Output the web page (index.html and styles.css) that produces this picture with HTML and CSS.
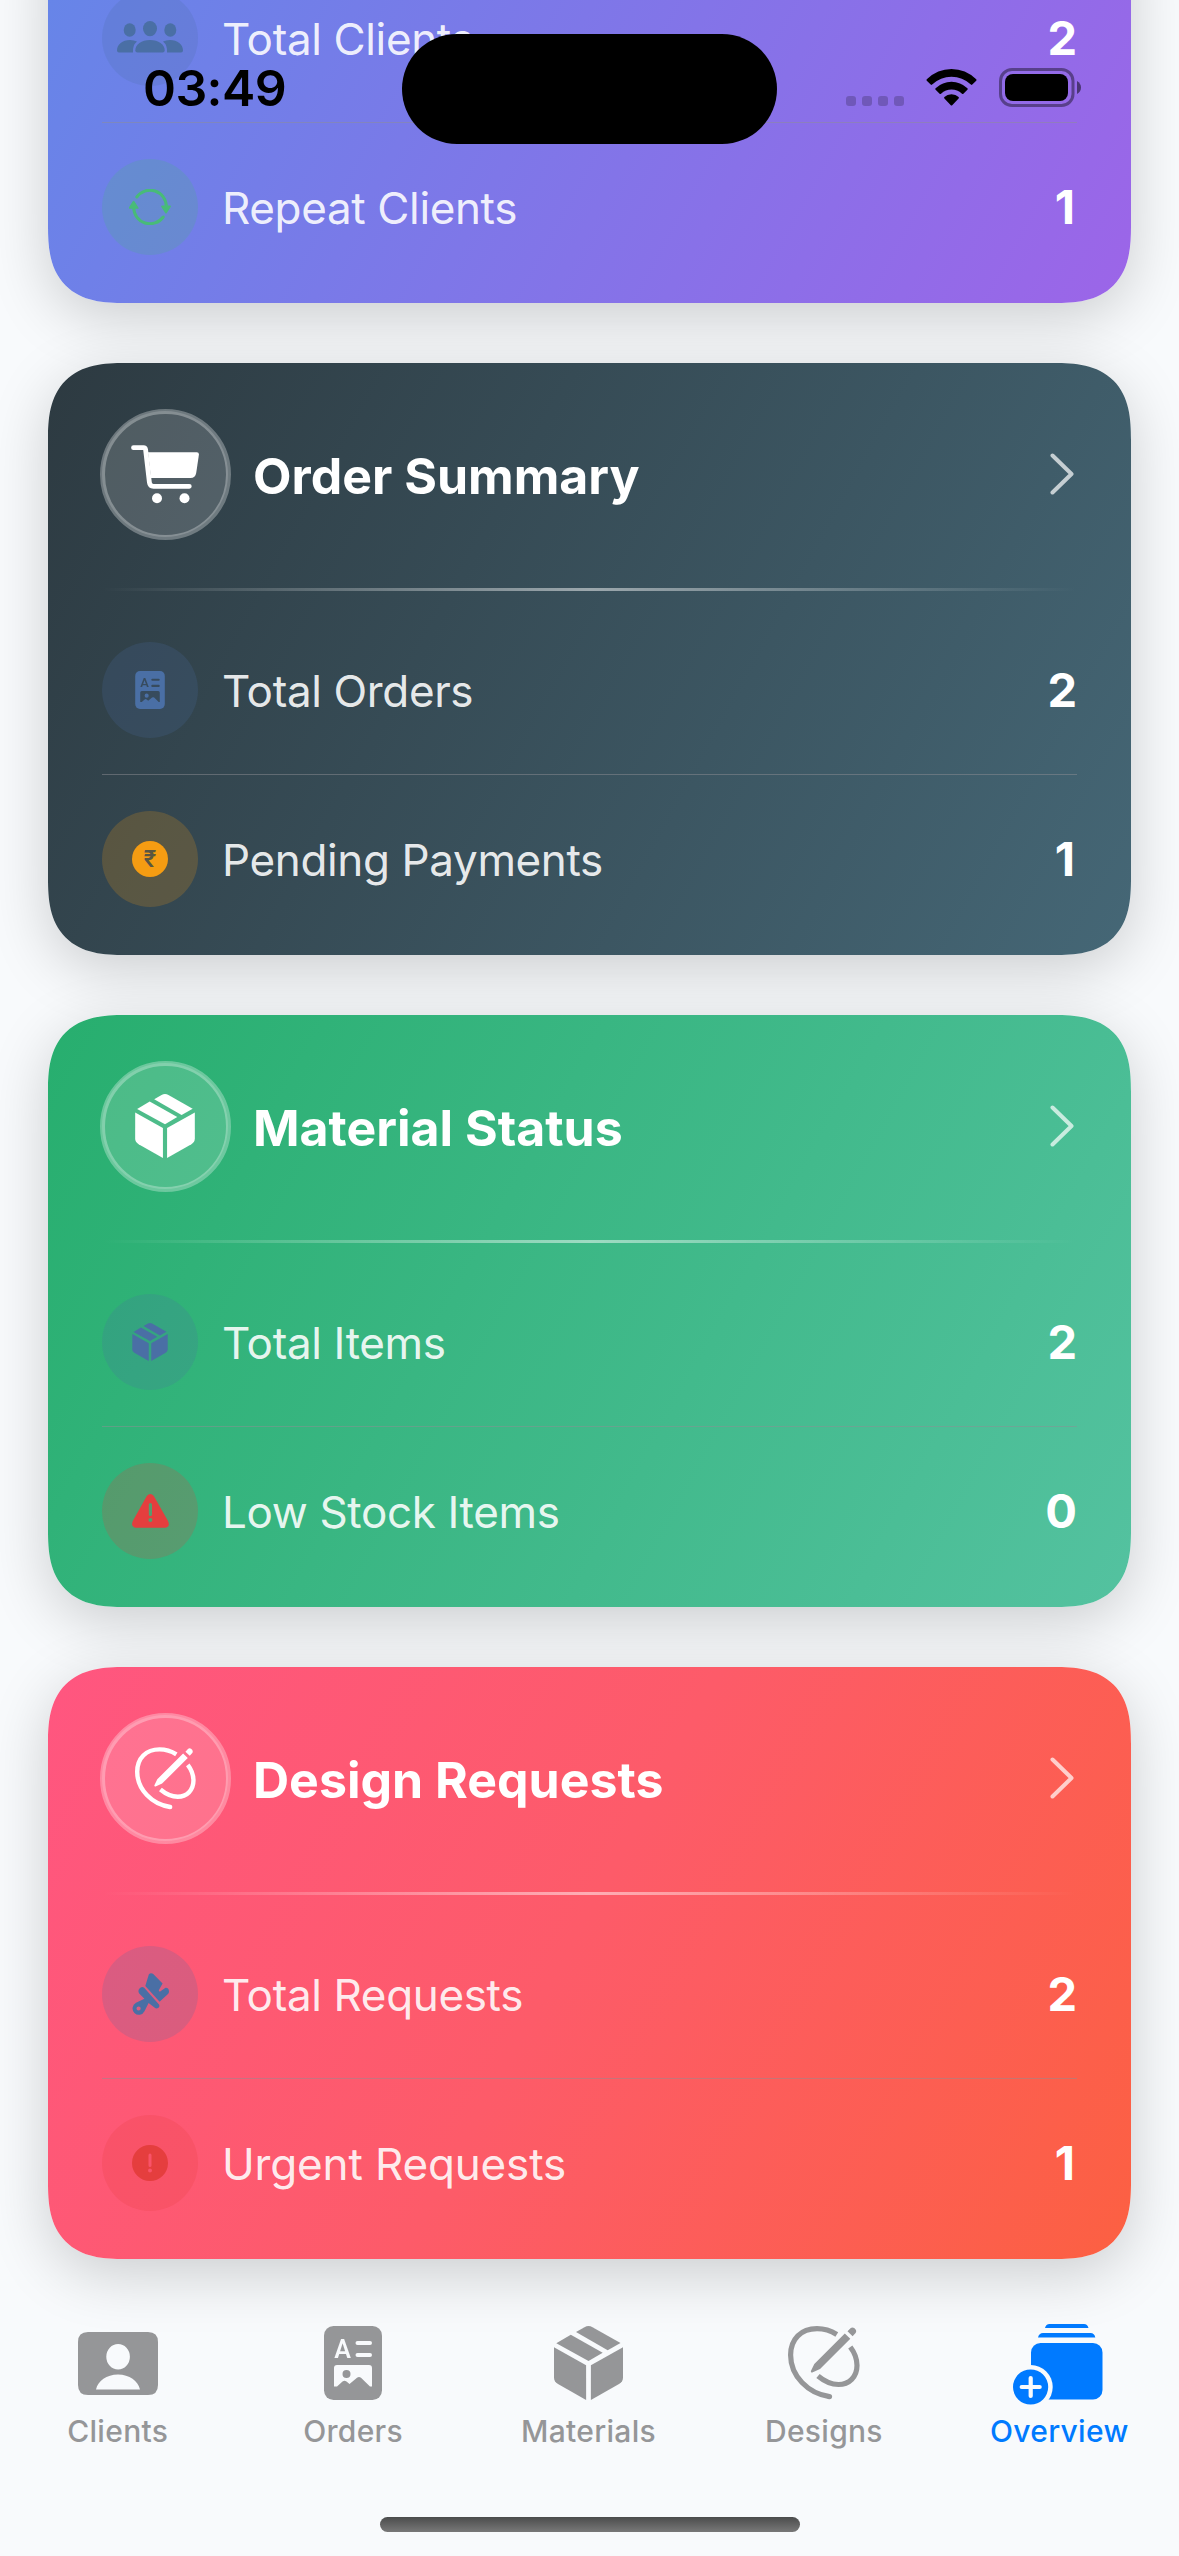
FILE: index.html
```html
<!DOCTYPE html>
<html lang="en">
<head>
<meta charset="utf-8">
<title>Overview</title>
<link rel="stylesheet" href="styles.css">
</head>
<body>
<svg class="sprite" aria-hidden="true">
  <defs>
    <mask id="doc-cut" maskUnits="userSpaceOnUse" x="0" y="0" width="58" height="74">
      <rect width="58" height="74" fill="#fff"/>
      <text x="18.5" y="32" text-anchor="middle" class="glyph-a">A</text>
      <path d="M33.5 17h12.500M33.500 29h12.500" stroke="#000" stroke-width="4" stroke-linecap="round"/>
      <path fill-rule="evenodd" d="M10 42q0-3 3-3h32q3 0 3 3v18.500h-2L37 51.800q-2-1.600-4 0L25.500 58l-3-2.500q-2-1.500-4 0L13 60.500h-3zM26.500 48a4 4 0 1 0-8 0a4 4 0 1 0 8 0z" fill="#000"/>
    </mask>
    <mask id="stack-cut" maskUnits="userSpaceOnUse" x="-10" y="-10" width="120" height="110">
      <rect x="-10" y="-10" width="120" height="110" fill="#fff"/>
      <circle cx="17.700" cy="63" r="22" fill="#000"/>
    </mask>
  </defs>
  <symbol id="i-doc" viewBox="0 0 58 74">
    <rect width="58" height="74" rx="9.500" fill="currentColor" mask="url(#doc-cut)"/>
  </symbol>
  <symbol id="i-box" viewBox="0 0 69 74">
    <g fill="currentColor">
      <path d="M0 21.300L32.100 39.300V74L4 58Q0 55.500 0 51.500z"/>
      <path d="M69 21.300L36.900 39.300V74L65 58Q69 55.500 69 51.500z"/>
      <path d="M2.300 17.300L16.800 8.800L48.700 26.700L34.500 35z"/>
      <path d="M22 6L30.500 1.200Q34.500-1 38.500 1.200L66.500 17L53.700 24.300z"/>
    </g>
  </symbol>
  <symbol id="i-design" viewBox="0 0 72 74">
    <path d="M48.800 8.500C42.500 4.500 36 2.600 29 2.600C13 2.600 2.600 13 2.600 29C2.600 50 20 67.500 41.500 70.600M62.300 21C66.500 26.500 69 33 69 39.500C69 51 61 58.500 50.500 58.500C43 58.500 36 55 30 50" fill="none" stroke="currentColor" stroke-width="5.200"/>
    <circle cx="41.500" cy="70.600" r="2.600" fill="currentColor"/>
    <path d="M56.800 7.500L62.300 12.800L32 43L24.300 46.500Q22.500 46.800 22.900 45L26.300 38zM59.500 5.300L62.500 2.200Q64.200 .700 66.200 2Q69.300 4.500 67.600 7L64.600 10.200z" fill="currentColor"/>
  </symbol>
  <symbol id="i-cart" viewBox="0 0 68 59">
    <path d="M2.500 2.700H12.500Q14.300 2.700 14.600 4.600L18.400 37.500Q18.900 41.300 22.500 41.300H58.300" fill="none" stroke="currentColor" stroke-width="4.800" stroke-linecap="round" stroke-linejoin="round"/>
    <path d="M17 7.300H65.800Q68.200 7.300 67.900 9.800L65.200 28Q64.400 33 59.500 33H20z" fill="currentColor"/>
    <circle cx="26" cy="53.300" r="5" fill="currentColor"/>
    <circle cx="53.500" cy="53.300" r="5" fill="currentColor"/>
  </symbol>
  <symbol id="i-people" viewBox="0 0 66 32">
    <g fill="currentColor">
      <ellipse cx="33" cy="7.600" rx="7" ry="7.600"/>
      <ellipse cx="12.700" cy="9" rx="6" ry="6.700"/>
      <ellipse cx="53.300" cy="9" rx="6" ry="6.700"/>
      <path d="M18.300 29.500C18.300 23.500 24.500 19 33 19S47.700 23.500 47.700 29.500Q47.700 31.500 45.500 31.500H20.500Q18.300 31.500 18.300 29.500z"/>
      <path d="M0 29.500C0 23.500 5.500 19 13 19Q17 19 20 20.500Q15.500 24 16 31.500H2Q0 31.500 0 29.500z"/>
      <path d="M66 29.500C66 23.500 60.500 19 53 19Q49 19 46 20.500Q50.500 24 50 31.500H64Q66 31.500 66 29.500z"/>
    </g>
  </symbol>
  <symbol id="i-repeat" viewBox="0 0 42 36">
    <path d="M7.800 8A16.300 16.300 0 0 1 37.300 17.500M34.200 28A16.300 16.300 0 0 1 4.700 18.500" fill="none" stroke="currentColor" stroke-width="3" stroke-linecap="round"/>
    <path d="M33.200 16.500h8q1.200 0 .6 1.200l-4 6.300q-.8 1-1.600 0l-4-6.300q-.4-1.200 1-1.200zM.8 19.700h8q1.200 0 .6-1.200l-4-6.300q-.8-1-1.600 0l-4 6.300q-.4 1.200 1 1.200z" fill="currentColor"/>
  </symbol>
  <symbol id="i-warning" viewBox="0 0 37 34">
    <path fill-rule="evenodd" fill="currentColor" d="M14.800 2Q18.300-2 21.800 2L36 27Q38.500 32.500 33.500 33.800H3.500Q-1.500 32.500 .8 27zM16.800 10.500V20.500a1.600 1.600 0 0 0 3.200 0V10.500a1.600 1.600 0 0 0-3.200 0zM16.400 25.900a2 2 0 1 0 4 0a2 2 0 1 0-4 0z"/>
  </symbol>
  <symbol id="i-alert" viewBox="0 0 36 36">
    <path fill-rule="evenodd" fill="currentColor" d="M0 18a18 18 0 1 0 36 0a18 18 0 1 0-36 0zM16.500 10V20.500a1.500 1.500 0 0 0 3 0V10a1.500 1.500 0 0 0-3 0zM16 25.500a2 2 0 1 0 4 0a2 2 0 1 0-4 0z"/>
  </symbol>
  <symbol id="i-brush" viewBox="0 0 37 42">
    <path fill-rule="evenodd" fill="currentColor" d="M16.800 1.500Q18.500-.8 21 .8L30.600 10.500L26.800 17.300Q26.800 18.700 28.200 18.500L33.500 14.800Q36.800 14.500 37 18.500Q37 20 36 21L27.600 28.800L13.300 13zM12.200 14.800L27 31.500Q28 33.500 26.500 34.700Q24.500 36 22.800 34.800L16.600 30L12.500 38.200A6.300 6.300 0 1 1 4 29.800L12.400 25.800L7.200 20.500Q5.500 17.700 7.500 15.600Q9.500 13 12.200 14.800zM4.500 35.500a2.100 2.100 0 1 0 4.200 0a2.100 2.100 0 1 0-4.200 0z"/>
  </symbol>
  <symbol id="i-chevron" viewBox="0 0 24 42">
    <path d="M2.500 2.500L21.500 21L2.500 39.500" fill="none" stroke="currentColor" stroke-width="4" stroke-linecap="round" stroke-linejoin="round"/>
  </symbol>
  <symbol id="i-contact" viewBox="0 0 80 63">
    <path fill-rule="evenodd" fill="currentColor" d="M10 0H70Q80 0 80 10V53Q80 63 70 63H10Q0 63 0 53V10Q0 0 10 0zM28.300 24.800a11.800 12.700 0 1 0 23.600 0a11.800 12.700 0 1 0-23.600 0zM18 57.500H62C60 49 51.500 42.600 40 42.600S20 49 18 57.500z"/>
  </symbol>
  <symbol id="i-stack" viewBox="0 0 90 81">
    <g fill="currentColor">
      <path d="M32 4Q33 0 36.500 0H71Q74.500 0 75.500 4zM25 13.500Q26 9 30 9H77.500Q81.500 9 82.300 13.500z"/>
      <rect x="18" y="19" width="71.500" height="56.500" rx="9.500" mask="url(#stack-cut)"/>
      <path fill-rule="evenodd" d="M0 63a17.600 17.600 0 1 0 35.200 0a17.600 17.600 0 1 0-35.200 0zM15.600 54a2.100 2.100 0 0 1 4.200 0V60.900H26.700a2.100 2.100 0 0 1 0 4.200H19.800V72a2.100 2.100 0 0 1-4.200 0V65.100H8.700a2.100 2.100 0 0 1 0-4.200H15.600z"/>
    </g>
  </symbol>
</svg>

<div class="screen">
  <main class="cards">
    <section class="card card--clients card--scrolled">
      <div class="row">
        <span class="badge blue"><svg width="66" height="32" class="raise"><use href="#i-people"/></svg></span>
        <span class="label">Total Clients</span><span class="value">2</span>
      </div>
      <div class="hairline"></div>
      <div class="row">
        <span class="badge green"><svg width="42" height="36"><use href="#i-repeat"/></svg></span>
        <span class="label">Repeat Clients</span><span class="value value--one">1</span>
      </div>
    </section>

    <section class="card card--orders">
      <header class="head">
        <span class="emblem"><svg width="68" height="59"><use href="#i-cart"/></svg></span>
        <h2 class="title">Order Summary</h2>
        <svg class="chevron" width="24" height="42"><use href="#i-chevron"/></svg>
      </header>
      <div class="divider"></div>
      <div class="row">
        <span class="badge blue"><svg width="30" height="38"><use href="#i-doc"/></svg></span>
        <span class="label">Total Orders</span><span class="value">2</span>
      </div>
      <div class="hairline"></div>
      <div class="row">
        <span class="badge orange"><span class="coin">₹</span></span>
        <span class="label">Pending Payments</span><span class="value value--one">1</span>
      </div>
    </section>

    <section class="card card--materials">
      <header class="head">
        <span class="emblem"><svg width="60" height="64"><use href="#i-box"/></svg></span>
        <h2 class="title">Material Status</h2>
        <svg class="chevron" width="24" height="42"><use href="#i-chevron"/></svg>
      </header>
      <div class="divider"></div>
      <div class="row">
        <span class="badge blue"><svg width="36" height="38"><use href="#i-box"/></svg></span>
        <span class="label">Total Items</span><span class="value">2</span>
      </div>
      <div class="hairline"></div>
      <div class="row">
        <span class="badge red"><svg width="37" height="34"><use href="#i-warning"/></svg></span>
        <span class="label">Low Stock Items</span><span class="value">0</span>
      </div>
    </section>

    <section class="card card--designs">
      <header class="head">
        <span class="emblem"><svg width="61" height="63"><use href="#i-design"/></svg></span>
        <h2 class="title">Design Requests</h2>
        <svg class="chevron" width="24" height="42"><use href="#i-chevron"/></svg>
      </header>
      <div class="divider"></div>
      <div class="row">
        <span class="badge blue"><svg width="37" height="42"><use href="#i-brush"/></svg></span>
        <span class="label">Total Requests</span><span class="value">2</span>
      </div>
      <div class="hairline"></div>
      <div class="row">
        <span class="badge red"><svg width="36" height="36"><use href="#i-alert"/></svg></span>
        <span class="label label--wide">Urgent Requests</span><span class="value value--one">1</span>
      </div>
    </section>
  </main>

  <nav class="tabs">
    <a class="tab"><span class="slot"><svg width="80" height="63"><use href="#i-contact"/></svg></span><span class="name">Clients</span></a>
    <a class="tab"><span class="slot"><svg width="58" height="74"><use href="#i-doc"/></svg></span><span class="name">Orders</span></a>
    <a class="tab"><span class="slot"><svg width="69" height="74"><use href="#i-box"/></svg></span><span class="name">Materials</span></a>
    <a class="tab"><span class="slot"><svg width="72" height="74"><use href="#i-design"/></svg></span><span class="name">Designs</span></a>
    <a class="tab tab--on"><span class="slot"><svg width="90" height="81"><use href="#i-stack"/></svg></span><span class="name">Overview</span></a>
  </nav>
  <div class="home"></div>

  <div class="status">
    <span class="clock">03:49</span>
    <span class="island"></span>
    <span class="signals">
      <span class="dots"><i></i><i></i><i></i><i></i></span>
      <svg class="wifi" width="51" height="37" viewBox="0 0 51 37">
        <path d="M25.500 0Q39.500 0 50.200 10.200Q51 11 50.200 11.800L46.300 15.600Q45.600 16.200 44.900 15.500Q36.500 7.700 25.500 7.700T6.100 15.500Q5.400 16.200 4.700 15.600L.8 11.800Q0 11 .8 10.200Q11.500 0 25.500 0zM25.500 12.700Q34.500 12.700 41.400 19.200Q42.200 20 41.400 20.800L37.400 24.700Q36.700 25.400 36 24.700Q31.300 20.500 25.500 20.500T15 24.700Q14.300 25.400 13.600 24.700L9.600 20.800Q8.800 20 9.600 19.200Q16.500 12.700 25.500 12.700zM25.500 25.300Q29.800 25.300 32.600 28Q33.300 28.800 32.600 29.500L26.200 36.200Q25.500 37 24.800 36.200L18.400 29.500Q17.700 28.800 18.400 28Q21.200 25.300 25.500 25.300z"/>
      </svg>
      <svg class="battery" width="82" height="39" viewBox="0 0 82 39">
        <rect x="1.500" y="1.500" width="72.500" height="36" rx="11.500" fill="none" stroke="#000" stroke-opacity=".4" stroke-width="3"/>
        <path d="M78 13Q82 15.500 82 19.500T78 26z" fill-opacity=".5"/>
        <rect x="6" y="6" width="63" height="27" rx="8"/>
      </svg>
    </span>
  </div>
</div>
</body>
</html>
```
FILE: styles.css
```css
* { box-sizing: border-box; }

body {
  margin: 0;
  background: #f8fafc;
  font-family: Inter, "Liberation Sans", sans-serif;
}

.sprite { position: absolute; width: 0; height: 0; }

.glyph-a { font: 600 25px Roboto, sans-serif; fill: #000; }

.screen {
  position: relative;
  width: 1179px;
  height: 2556px;
  overflow: hidden;
  display: flex;
  flex-direction: column;
}

.cards {
  display: flex;
  flex-direction: column;
  gap: 60px;
  padding: 0 48px;
}

.card {
  height: 592px;
  padding: 48px 54px;
  border-radius: 62px;
  box-shadow: 0 15px 60px rgba(0, 0, 0, .18);
  color: #fff;
  flex: none;
}

@supports (corner-shape: squircle) {
  .card { border-radius: 77px; corner-shape: superellipse(1.42); }
}

.card--clients { background: linear-gradient(118.66deg, #6089e8, #9c65e8) bottom / 100% 592px; }
.card--orders { background: linear-gradient(118.66deg, #2d3a41, #456776); }
.card--materials { background: linear-gradient(118.66deg, #27ae6e, #54c2a0); }
.card--designs { background: linear-gradient(118.66deg, #ff5680, #fd5b69 48%, #fc6042); }

/* top part is scrolled off the screen */
.card--scrolled { height: 403px; margin-top: -100px; padding-top: 90px; }

.head { display: flex; align-items: center; height: 126px; }

.emblem {
  position: relative;
  width: 126px;
  height: 126px;
  border-radius: 50%;
  background: rgba(255, 255, 255, .16);
  display: grid;
  place-items: center;
}
.emblem::after {
  content: "";
  position: absolute;
  inset: -2.5px;
  border: 5px solid rgba(255, 255, 255, .3);
  border-radius: 50%;
}

.title {
  flex: 1;
  margin: 4px 0 0 25px;
  font-size: 50px;
  font-weight: 680;
  line-height: 60px;
  letter-spacing: 0;
  white-space: nowrap;
}

.chevron { color: rgba(255, 255, 255, .7); margin-right: 3px; }

.divider {
  height: 3px;
  margin: 51px 0;
  background: linear-gradient(90deg, rgba(255, 255, 255, 0), rgba(255, 255, 255, .5), rgba(255, 255, 255, 0));
}

.row { display: flex; align-items: center; height: 96px; }

.hairline { height: 1px; margin: 36px 0; background: rgba(142, 142, 147, .5); }

.badge {
  position: relative;
  width: 96px;
  height: 96px;
  display: grid;
  place-items: center;
}
.badge::before {
  content: "";
  position: absolute;
  inset: 0;
  border-radius: 50%;
  background: currentColor;
  opacity: .2;
}
.badge svg { position: relative; }
.raise { margin-top: -2px; }

.blue { color: #4a6fa5; }
.green { color: #48bb78; }
.orange { color: #f59c12; }
.red { color: #e53e3e; }

.coin {
  position: relative;
  width: 36px;
  height: 36px;
  border-radius: 50%;
  background: #f59c12;
  color: #5a5640;
  font-size: 23px;
  font-weight: 600;
  line-height: 37px;
  text-align: center;
}

.label {
  flex: 1;
  margin: 1px 0 0 24px;
  font-size: 44px;
  line-height: 54px;
  letter-spacing: -.36px;
  color: rgba(255, 255, 255, .9);
  white-space: nowrap;
}
.label--wide { letter-spacing: -.15px; }

.value { font-size: 47px; font-weight: 700; line-height: 56px; }
.value--one { margin-right: 2px; }

.tabs {
  display: grid;
  grid-template-columns: repeat(5, 1fr);
  margin-top: 59px;
  padding-right: 2px;
  color: #959698;
}
.tab { display: flex; flex-direction: column; align-items: center; }
.tab--on { color: #007aff; }
.tab--on .slot { padding: 2px 3px 0 0; }
.slot { display: grid; place-items: center; height: 90px; }
.name { margin-top: 5px; font-size: 30px; font-weight: 500; line-height: 36px; letter-spacing: .3px; }

.home {
  width: 420px;
  height: 15px;
  margin: 68px auto 0;
  border-radius: 8px;
  background: linear-gradient(#4b4c4c, #787878);
}

.status {
  position: absolute;
  inset: 0 0 auto;
  height: 177px;
  color: #000;
}
.clock {
  position: absolute;
  left: 143px;
  top: 58px;
  font-size: 50px;
  font-weight: 600;
  line-height: 60px;
  letter-spacing: -.6px;
}
.island {
  position: absolute;
  left: 402px;
  top: 34px;
  width: 375px;
  height: 110px;
  border-radius: 55px;
  background: #000;
}
.signals {
  position: absolute;
  left: 846px;
  top: 68px;
  display: flex;
  align-items: flex-start;
}
.dots { display: flex; gap: 6px; margin-top: 28px; }
.dots i { width: 10px; height: 10px; border-radius: 3px; background: rgba(0, 0, 0, .2); }
.wifi { margin: 1px 0 0 22px; }
.battery { margin-left: 22px; }
```
